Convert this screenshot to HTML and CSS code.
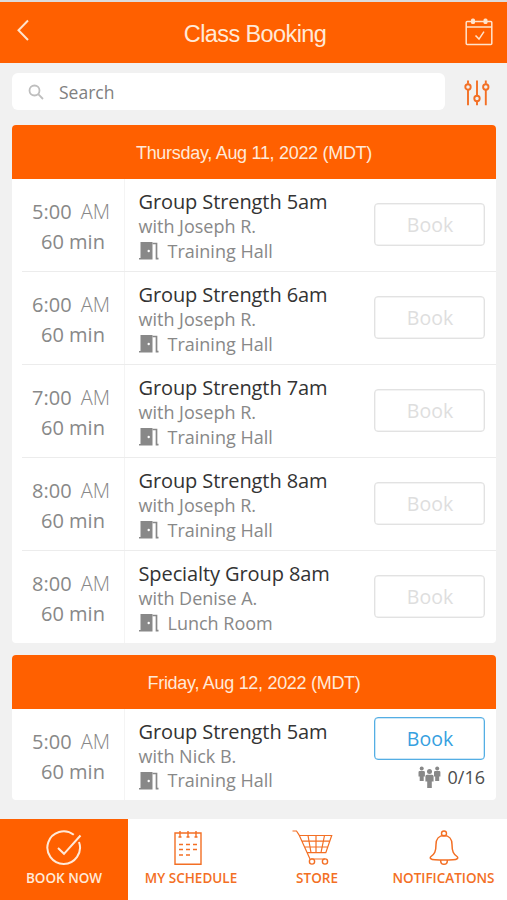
FILE: index.html
```html
<!DOCTYPE html>
<html lang="en">
<head>
<meta charset="utf-8">
<title>Class Booking</title>
<link rel="stylesheet" href="styles.css">
</head>
<body>
<svg class="defs" width="0" height="0" aria-hidden="true">
  <symbol id="door" viewBox="0 0 20 19">
    <path fill="#888" d="M1.500 0h12v17.500H0V16h1.500z"/>
    <path d="M13.500 1.500h4v15.200h2" fill="none" stroke="#888" stroke-width="1.700"/>
    <circle cx="9.700" cy="9" r="1.200" fill="#fff"/>
  </symbol>
</svg>
<header class="topbar">
  <svg class="back" width="14" height="24" viewBox="0 0 14 24"><path d="M12 2.500 2.500 12.200 12 22"/></svg>
  <h1>Class Booking</h1>
  <svg class="calendar" width="30" height="30" viewBox="0 0 30 30">
    <rect x="2.200" y="4.500" width="25.600" height="23" rx="1"/><path d="M2 10h26M11.500 18.500l3.500 3.600 5-7.500"/>
    <rect class="ring" x="7" y="1.500" width="4" height="5.500" rx="1.500"/><rect class="ring" x="19.500" y="1.500" width="4" height="5.500" rx="1.500"/>
  </svg>
</header>
<div class="searchrow">
  <label class="search">
    <svg width="17" height="17" viewBox="0 0 17 17"><circle cx="6.500" cy="6.500" r="5"/><path d="m10.200 10.200 4.800 4.800"/></svg>
    <span>Search</span>
  </label>
  <svg class="filters" width="26" height="26" viewBox="0 0 26 26">
    <path d="M4 .5v3.300M4 10v15.200M13 .5v14.800M13 21.500v3.700M21.800.5v3.300M21.800 10v15.200"/>
    <circle cx="4" cy="7" r="2.700"/><circle cx="13" cy="18.500" r="2.700"/><circle cx="21.800" cy="7" r="2.700"/>
  </svg>
</div>
<main>
  <section class="day">
    <h2>Thursday, Aug 11, 2022 (MDT)</h2>
    <article class="slot">
      <div class="time"><div>5:00 <span>AM</span></div><p>60 min</p></div>
      <div class="info"><h3>Group Strength 5am</h3><p>with Joseph R.</p><p class="room"><svg><use href="#door"/></svg>Training Hall</p></div>
      <div class="action"><button disabled>Book</button></div>
    </article>
    <article class="slot">
      <div class="time"><div>6:00 <span>AM</span></div><p>60 min</p></div>
      <div class="info"><h3>Group Strength 6am</h3><p>with Joseph R.</p><p class="room"><svg><use href="#door"/></svg>Training Hall</p></div>
      <div class="action"><button disabled>Book</button></div>
    </article>
    <article class="slot">
      <div class="time"><div>7:00 <span>AM</span></div><p>60 min</p></div>
      <div class="info"><h3>Group Strength 7am</h3><p>with Joseph R.</p><p class="room"><svg><use href="#door"/></svg>Training Hall</p></div>
      <div class="action"><button disabled>Book</button></div>
    </article>
    <article class="slot">
      <div class="time"><div>8:00 <span>AM</span></div><p>60 min</p></div>
      <div class="info"><h3>Group Strength 8am</h3><p>with Joseph R.</p><p class="room"><svg><use href="#door"/></svg>Training Hall</p></div>
      <div class="action"><button disabled>Book</button></div>
    </article>
    <article class="slot">
      <div class="time"><div>8:00 <span>AM</span></div><p>60 min</p></div>
      <div class="info"><h3>Specialty Group 8am</h3><p>with Denise A.</p><p class="room"><svg><use href="#door"/></svg>Lunch Room</p></div>
      <div class="action"><button disabled>Book</button></div>
    </article>
  </section>
  <section class="day">
    <h2>Friday, Aug 12, 2022 (MDT)</h2>
    <article class="slot open">
      <div class="time"><div>5:00 <span>AM</span></div><p>60 min</p></div>
      <div class="info"><h3>Group Strength 5am</h3><p>with Nick B.</p><p class="room"><svg><use href="#door"/></svg>Training Hall</p></div>
      <div class="action">
        <button>Book</button>
        <div class="spots">
          <svg width="23" height="23" viewBox="0 0 23 23">
            <g id="person"><circle cx="3.700" cy="2.500" r="2"/><path d="M1.700 5h4q1.200 0 1.200 1.200v4.300H5.700V15h-4v-4.500H.5V6.200Q.5 5 1.700 5z"/></g>
            <use href="#person" x="15.500"/>
            <circle cx="11.500" cy="5.600" r="2.500"/><path d="M9 8.700h5q1.600 0 1.600 1.600v5.200h-1.800V22H9.200v-6.500H7.400v-5.200Q7.400 8.700 9 8.700z"/>
          </svg>
          0/16
        </div>
      </div>
    </article>
  </section>
</main>
<nav>
  <a class="tab active">
    <svg width="38" height="38" viewBox="0 0 38 38"><path d="M34 13A16.300 16.300 0 1 1 28.800 5.800M13 19l6 5.800L35.500 6.500" stroke-width="2"/></svg>
    <span>BOOK NOW</span>
  </a>
  <a class="tab schedule">
    <svg width="38" height="38" viewBox="0 0 38 38"><path d="M6 4h26v31.300H6zM11 2v6M19 2v6M27 2v6M9.500 8h3M17.500 8h3M25.500 8h3M10 15.500h4M17 15.500h4M24 15.500h4M10 20.500h4M17 20.500h4M24 20.500h4M10 26h4M17 26h4"/></svg>
    <span>MY SCHEDULE</span>
  </a>
  <a class="tab store">
    <svg width="42" height="38" viewBox="0 0 42 38"><path d="M.5 2h4l2.500 3.800L18 30M7.500 6.500h32.200l-5.900 17.200H15M9.500 12.200h28.300M12.300 18h23.500M16 6.500l3 17.200M24 6.500v17.200M32.500 6.500L29 23.700M19 30h14" stroke-width="1.200"/><circle cx="20" cy="32.500" r="2.600"/><circle cx="33" cy="32.500" r="2.600"/></svg>
    <span>STORE</span>
  </a>
  <a class="tab">
    <svg width="38" height="38" viewBox="0 0 38 38"><circle cx="19" cy="4.500" r="2.500"/><path d="M19 6.500c-5 0-8 3.700-8 9 0 7-1.500 9.500-5 12-1.700 1.500-.5 3 4 3.200q9 .8 18 0c4.500-.2 5.700-1.700 4-3.200-3.500-2.500-5-5-5-12 0-5.300-3-9-8-9M15.700 31v1a3.300 3.300 0 0 0 6.600 0v-1" stroke-width="1.500"/></svg>
    <span>NOTIFICATIONS</span>
  </a>
</nav>
</body>
</html>
```
FILE: styles.css
```css
* { box-sizing: border-box; }
body {
  margin: 0;
  width: 507px;
  height: 900px;
  overflow: hidden;
  display: flex;
  flex-direction: column;
  background: #f1f1f1;
  color: #888;
  font-family: "Open Sans", sans-serif;
}
h1, h2, h3, p { margin: 0; font-weight: 400; }
svg { display: block; flex: none; fill: none; }
.defs { position: absolute; }
.topbar {
  height: 63px;
  flex: none;
  border-top: 2px solid #dcdcdc;
  background: #ff6000;
  display: grid;
  grid-template-columns: 1fr auto 1fr;
  align-items: center;
  padding: 0 13px 0 16px;
}
.topbar svg { stroke: #ffe3cc; stroke-width: 1.500; }
.topbar .back { stroke-width: 2; margin-top: -5px; }
.topbar .calendar { justify-self: end; margin-top: -1px; }
.topbar .ring { fill: #ffe3cc; stroke: none; }
h1 {
  font: 23.500px/30px "Liberation Sans", sans-serif;
  color: #ffe9d8;
  letter-spacing: -0.600px;
  padding-top: 3px;
}
.searchrow {
  height: 62px;
  flex: none;
  display: flex;
  align-items: center;
  justify-content: space-between;
  padding: 0 17px 5px 12px;
}
.search {
  width: 433px;
  height: 37px;
  border-radius: 6px;
  background: #fff;
  display: flex;
  align-items: center;
  gap: 14px;
  padding-left: 16px;
  font-size: 17.500px;
  color: #808080;
}
.search svg { stroke: #bebebe; stroke-width: 1.800; margin-top: 2px; }
.filters { stroke: #f36f24; stroke-width: 1.900; margin-top: 3px; }
main { flex: 1; display: flex; flex-direction: column; gap: 12px; padding: 0 11px 0 12px; }
.day { background: #fff; border-radius: 4px; overflow: hidden; flex: none; }
h2 {
  height: 54px;
  background: #ff6000;
  color: #ffe9d8;
  text-align: center;
  font: 18px/56px "Liberation Sans", sans-serif;
  letter-spacing: -0.300px;
}
.slot { height: 93px; display: grid; grid-template-columns: 113px 1fr 122px; position: relative; }
.slot:last-child { height: 91.500px; }
.slot + .slot::before {
  content: "";
  position: absolute;
  inset: -1px 0 auto 10px;
  height: 1px;
  background: #ececec;
}
.time { border-right: 1px solid #f4f4f4; padding: 18px 0 0 20px; font-size: 20px; line-height: 30px; }
.time span { font-weight: 300; margin-left: 4px; }
.time p { padding-left: 9px; }
.info { padding: 10px 0 0 13.500px; font-size: 18px; line-height: 24.500px; }
.info h3 { font-size: 20px; line-height: 25px; color: #333; white-space: nowrap; letter-spacing: -0.100px; }
.room { display: flex; align-items: center; gap: 9px; }
.room svg { width: 20px; height: 19px; margin-top: 2px; }
.action { padding: 24px 11px 0 0; }
button {
  display: block;
  width: 111px;
  height: 43px;
  padding: 0 0 0 1px;
  border: 1.500px solid #e2e2e2;
  box-shadow: inset 0 0 0 0.500px #e8e8e8;
  border-radius: 4px;
  background: #fff;
  color: #dedede;
  font: 19.500px "Open Sans", sans-serif;
}
.open .action { padding-top: 8px; }
.open button { border-color: #54aee4; box-shadow: inset 0 0 0 0.500px #9bd0ef; color: #36a0e0; }
.spots { display: flex; align-items: center; justify-content: flex-end; gap: 7px; font-size: 18px; line-height: 35px; color: #4c4c4c; }
.spots svg { fill: #888; }
nav { height: 81px; flex: none; display: grid; grid-template-columns: 128px 126px 126px 127px; background: #fff; }
.tab { display: flex; flex-direction: column; align-items: center; padding-top: 10px; color: #f36f24; font-size: 13.500px; font-weight: 600; line-height: 22px; white-space: nowrap; }
.tab svg { stroke: currentColor; stroke-width: 1.400; }
.schedule svg { margin-right: 7px; }
.store svg { margin-right: 8px; }
.tab.active { background: #ff6000; color: #ffe9d8; }
```
